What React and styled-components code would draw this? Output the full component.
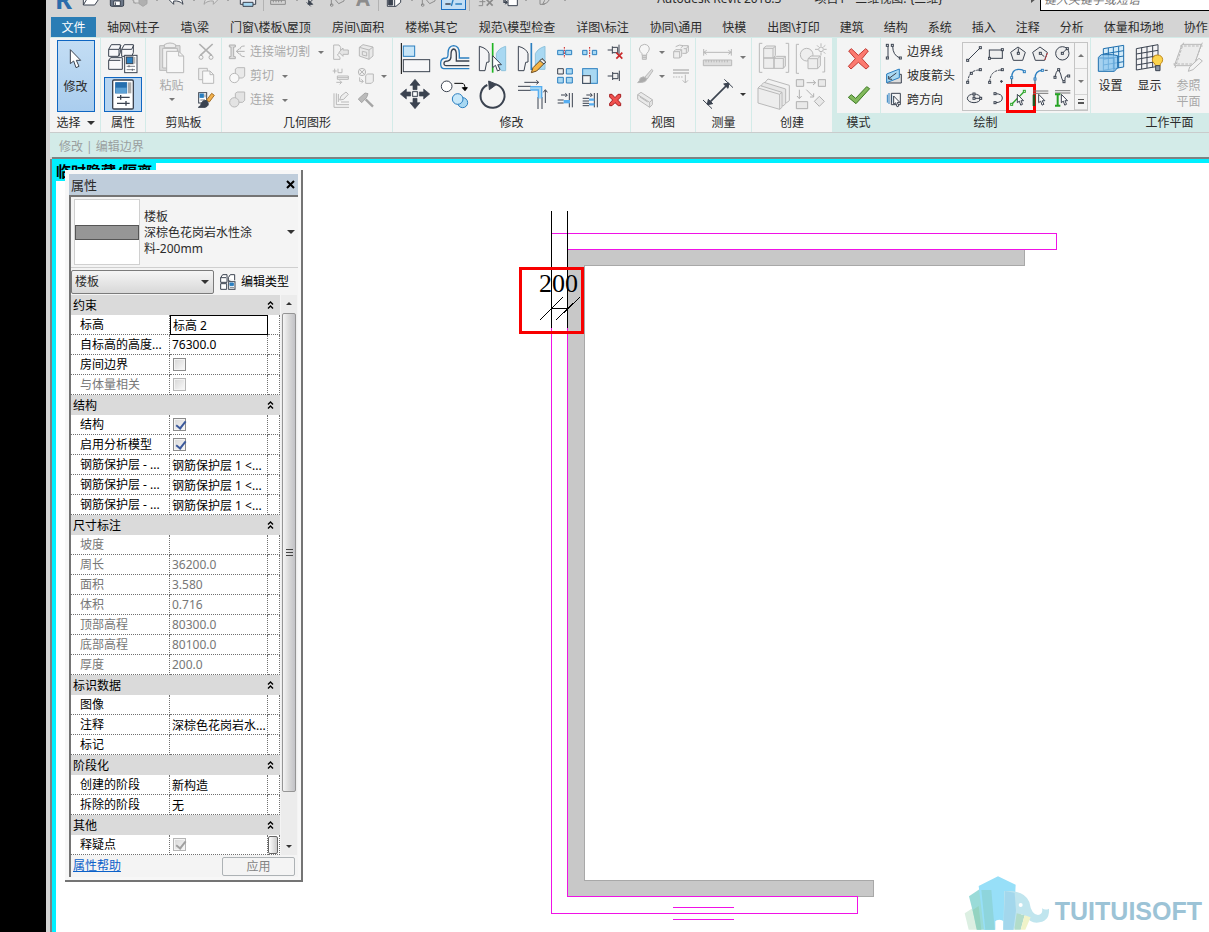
import React, { useState } from "react";
import styled, { createGlobalStyle } from "styled-components";

const D = "#3b4350";
const G = "#b9b9b9";
const B = "#2b7fc0";
const L = "#a8d8f2";
const W = "#f8f8fa";

// icons are drawn on a 3x grid: viewBox units / 3 = pixels
const Icon = ({ v, c = D, w = 3, children }) => (
  <IconSvg
    viewBox={v.join(" ")}
    width={Math.round(v[2] / 3)}
    height={Math.round(v[3] / 3)}
    fill="none"
    stroke={c}
    strokeWidth={w}
    aria-hidden="true"
  >
    {children}
  </IconSvg>
);

const Cursor = ({ x, y, s = 1 }) => (
  <path
    transform={`translate(${x} ${y}) scale(${s})`}
    d="M0 0V42L10 34L17 54L26 50L18 32H31Z"
    fill="#fff"
    stroke={D}
    strokeWidth={3 / s}
  />
);

const Dots = ({ p, c = D }) =>
  p.map(([x, y]) => (
    <rect key={x + "-" + y} x={x - 3} y={y - 3} width="6" height="6" fill="#fff" stroke={c} />
  ));

const icons = {
  // quick access
  open: (
    <Icon v={[0, 0, 54, 48]}>
      <path d="M4 42V8H18L22 14H42V22M4 42L16 22H52L38 42Z" fill="#fff" />
    </Icon>
  ),
  save: (
    <Icon v={[0, 0, 48, 48]}>
      <path d="M4 4H38L44 10V42Q44 46 40 46H8Q4 46 4 42Z" fill="#6b7687" />
      <path d="M12 4H36V20H12ZM14 30H34V44H14Z" fill="#fff" />
      <path d="M19 34V42" />
    </Icon>
  ),
  sync: (
    <Icon v={[0, 0, 54, 48]} c="#a5a5a5">
      <path d="M8 14H30V36H8ZM2 24L14 38" fill="#ddd" />
      <path d="M24 18L36 12L48 18V38L36 46L24 38Z" fill="#b0b0b0" />
      <circle cx="44" cy="20" r="7" fill="#ccc" />
    </Icon>
  ),
  undo: (
    <Icon v={[0, 0, 54, 48]}>
      <path d="M4 24L20 8V18Q46 16 48 40Q38 28 20 30V40Z" fill="#fff" />
    </Icon>
  ),
  redo: (
    <Icon v={[0, 0, 54, 48]} c="#a5a5a5">
      <path d="M50 24L34 8V18Q8 16 6 40Q16 28 34 30V40Z" fill="#ddd" />
    </Icon>
  ),
  print: (
    <Icon v={[0, 0, 54, 48]}>
      <path d="M12 4H42V20H12Z" fill="#fff" />
      <path d="M4 20H50V40H4Z" fill="#e8e8ee" />
      <path d="M12 34H42V46H12Z" fill={L} />
    </Icon>
  ),
  ruler: (
    <Icon v={[0, 0, 48, 48]} c="#8c8c8c">
      <path d="M2 14H46M2 28H46V40H2ZM10 28V34M18 28V34M26 28V34M34 28V34" />
    </Icon>
  ),
  dim: (
    <Icon v={[0, 0, 42, 48]}>
      <path d="M6 40L34 12M2 34L14 46M28 6L40 18" />
      <path d="M8 40V28L20 40Z" fill={D} />
    </Icon>
  ),
  tag: (
    <Icon v={[0, 0, 48, 48]} c="#8c8c8c">
      <path d="M4 42V20L22 10H42V30L26 38L14 24" />
      <circle cx="5" cy="42" r="4" />
      <path d="M24 18L34 26" />
    </Icon>
  ),
  cube: (
    <Icon v={[0, 0, 48, 48]}>
      <path d="M4 20L18 8H44V34L30 46H4Z" fill="#fff" />
      <path d="M4 20H26L44 10M26 20V46" />
      <path d="M8 24H20V42H8Z" fill={D} />
    </Icon>
  ),
  thin: (
    <Icon v={[0, 0, 57, 54]} c={D} w={4}>
      <path d="M4 14H20M36 14H54M4 28H20M4 42H20" />
      <path d="M22 48L34 6" stroke={B} />
      <path d="M34 28H54M34 42H54" stroke={B} />
    </Icon>
  ),
  closeWin: (
    <Icon v={[0, 0, 48, 48]} c="#8c8c8c">
      <path d="M2 20H14V44H2M14 10H30V20M4 32H22" />
      <path d="M26 26L44 44M44 26L26 44" strokeWidth="5" />
    </Icon>
  ),
  switchWin: (
    <Icon v={[0, 0, 48, 48]}>
      <path d="M18 22H46V44H18Z" fill="#fff" />
      <path d="M18 25H46M6 16V34H14" strokeWidth="4" />
      <path d="M10 28L16 34L10 40" fill={D} />
    </Icon>
  ),
  pencil: (
    <Icon v={[0, 0, 48, 48]} c="#8c8c8c">
      <path d="M6 16V40H20M14 40L20 28L40 6L46 12L26 36Z" />
    </Icon>
  ),

  // select / properties
  modify: (
    <Icon v={[84, 141, 45, 66]}>
      <Cursor x={91} y={146} />
    </Icon>
  ),
  typeProps: (
    <Icon v={[200, 126, 96, 93]}>
      <path d="M205 145L213 131H240V155L234 166H205ZM244 145L252 131H279V155L274 166H244Z" fill={W} />
      <path d="M205 145H236L242 133M236 145V166M244 145H274L280 133" />
      <path d="M205 178L211 170H246V205H205ZM205 178H240" fill={W} />
      <rect x="253" y="163" width="37" height="52" fill="#fff" />
      <rect x="258" y="168" width="20" height="20" fill={B} />
      <path d="M282 168V188" stroke="#b5b5b5" strokeWidth="6" />
      <path d="M259 196H284M259 206H284M266 192V199M276 203V210" strokeWidth="2" />
    </Icon>
  ),
  props: (
    <Icon v={[208, 234, 72, 93]}>
      <rect x="213" y="237" width="62" height="87" rx="4" fill="#fff" strokeWidth="4" />
      <rect x="222" y="245" width="33" height="31" fill="#256fae" stroke="#256fae" />
      <path d="M222 260H255V276H222Z" fill="#5ba0d4" stroke="none" />
      <path d="M264 244V277" stroke="#aaa" strokeWidth="10" />
      <path d="M226 289H264M226 307H264M237 282V296M253 300V314" strokeWidth="4" />
    </Icon>
  ),

  // clipboard
  paste: (
    <Icon v={[354, 126, 81, 96]} c={G}>
      <path d="M359 137H420V211H359Z" fill="#dcdcdc" />
      <path d="M368 145H412V204H368Z" fill="#f1f1f1" />
      <path d="M373 143V134Q390 124 407 134V143Z" fill="#eee" />
      <path d="M380 154H416L431 168V218H380Z" fill="#f7f7f7" />
      <path d="M416 154V168H431" />
    </Icon>
  ),
  cut: (
    <Icon v={[474, 129, 54, 54]} c="#b0b0b0">
      <path d="M481 132L518 166M521 132L484 166" strokeWidth="5" />
      <circle cx="486" cy="172" r="6" />
      <circle cx="516" cy="172" r="6" />
    </Icon>
  ),
  copy: (
    <Icon v={[474, 201, 54, 54]} c={G}>
      <path d="M479 205H505V239H479Z" fill="#eee" />
      <path d="M491 213H513L524 224V250H491Z" fill="#f8f8f8" />
      <path d="M513 213V224H524" />
    </Icon>
  ),
  match: (
    <Icon v={[474, 273, 54, 54]}>
      <rect x="479" y="278" width="24" height="31" fill="#fff" />
      <rect x="483" y="282" width="10" height="10" fill={B} stroke={B} />
      <path d="M484 300H498M498 283V292" strokeWidth="2" />
      <path d="M503 300L518 280L526 286L511 306Z" fill="#f3b14a" stroke="#a5702a" />
      <path d="M478 322Q486 318 488 308Q496 296 506 305Q512 318 498 322Z" fill={D} />
    </Icon>
  ),

  // geometry
  cope: (
    <Icon v={[564, 129, 54, 54]} c="#b0b0b0">
      <path d="M568 135H586V141H581V170H586V176H568V170H573V141H568Z" fill="#ddd" />
      <path d="M614 138Q600 138 600 148M614 170Q600 170 600 160M614 154H590M598 146L589 154L598 162" />
    </Icon>
  ),
  cutGeom: (
    <Icon v={[564, 201, 54, 54]} c={G}>
      <path d="M586 207L592 203H614V228L608 234H586Z" fill="#e9e9e9" />
      <circle cx="583" cy="234" r="14" fill="#f8f8f8" />
    </Icon>
  ),
  joinGeom: (
    <Icon v={[564, 273, 54, 54]} c={G}>
      <path d="M586 280L592 276H614V301L608 307H586Z" fill="#e3e3e3" />
      <circle cx="583" cy="307" r="14" fill="#e3e3e3" />
    </Icon>
  ),
  joinWall: (
    <Icon v={[873, 129, 54, 54]} c={G}>
      <path d="M878 135H894L899 142V155L889 165L897 172V178H878Z" fill="#f2f2f2" />
      <path d="M922 150H906V144L894 157L906 169V163H922Z" fill="#e5e5e5" />
    </Icon>
  ),
  wallOpen: (
    <Icon v={[948, 129, 54, 54]} c={G}>
      <path d="M955 142L966 134L996 141V168L984 178L955 168Z" fill="#e9e9e9" />
      <path d="M955 142L984 150V178M984 150L996 141M964 154L977 157V168L964 165Z" />
    </Icon>
  ),
  beam: (
    <Icon v={[873, 201, 54, 54]} c={G}>
      <path d="M881 206V220M875 213H887M891 206V218H903V206M889 228H922V238H889ZM886 247H902M896 241L902 247L896 253M889 233H922" />
    </Icon>
  ),
  split: (
    <Icon v={[948, 201, 54, 54]} c={G}>
      <circle cx="963" cy="216" r="11" fill="#eee" />
      <path d="M955 208L971 224M971 208L955 224M956 232V244H966M961 238L967 244L961 250" />
      <path d="M974 227L980 222H997V244L991 250H974Z" fill="#eee" />
    </Icon>
  ),
  paintWall: (
    <Icon v={[873, 273, 54, 54]} c={G}>
      <path d="M879 280V322H924M886 280V314H924M892 282V306M900 306H924" />
      <path d="M896 300L900 288L915 276L922 283L908 298Z" fill="#eee" />
    </Icon>
  ),
  hammer: (
    <Icon v={[948, 273, 54, 54]} c="#a5a5a5">
      <path d="M974 298L996 320" strokeWidth="7" />
      <path d="M952 297L972 279L981 281L977 292L962 308Z" fill="#bbb" />
    </Icon>
  ),

  // modify
  align: (
    <Icon v={[27, 123, 96, 96]}>
      <path d="M31 126V219" stroke="#000" />
      <rect x="37" y="135" width="34" height="31" fill="#c7e5f7" stroke={B} />
      <rect x="37" y="176" width="79" height="36" fill="#f6f6f8" />
    </Icon>
  ),
  offset: (
    <Icon v={[144, 126, 96, 93]}>
      <path d="M235 206H158Q148 204 149 188Q150 174 166 174Q172 172 171 160Q171 138 188 137Q205 138 205 160V174H235" stroke={B} strokeWidth="4" />
      <path d="M235 197H166Q158 196 159 189Q160 183 170 183Q181 181 180 164Q180 148 188 147Q196 148 196 164V183H235" strokeWidth="4" />
    </Icon>
  ),
  mirrorPick: (
    <Icon v={[264, 123, 93, 96]}>
      <path d="M268 136Q292 142 297 158V183L290 184L285 209H268Z" fill="#f4f4f6" />
      <path d="M347 136Q326 142 319 158V180L334 209H347Z" fill={L} stroke="#8fc3dd" />
      <path d="M308 126V215" stroke="#1fb522" strokeWidth="5" />
      <Cursor x={308} y={164} s={0.85} />
    </Icon>
  ),
  mirrorDraw: (
    <Icon v={[381, 123, 93, 96]}>
      <path d="M385 136Q409 142 414 158V183L407 184L402 209H385Z" fill="#f4f4f6" />
      <path d="M465 136Q444 142 436 158V205H465Z" fill={L} stroke="#8fc3dd" />
      <path d="M424 126V207" stroke={B} strokeWidth="5" />
      <path d="M424 215L429 200L456 173L467 183L440 210Z" fill="#f6b544" stroke="#6c4b1f" />
      <path d="M456 173L467 183L462 189L450 179Z" fill="#eee" />
    </Icon>
  ),
  move: (
    <Icon v={[30, 234, 93, 93]}>
      <path d="M75 235L90 253H81V266H69V253H60ZM75 323L90 305H81V292H69V305H60ZM31 279L49 264V273H62V285H49V294ZM119 279L101 264V273H88V285H101V294Z" fill={D} strokeWidth="2" />
      <rect x="68" y="272" width="14" height="14" fill="#fff" />
    </Icon>
  ),
  copyTool: (
    <Icon v={[147, 234, 90, 93]}>
      <circle cx="167" cy="256" r="16" fill="#fff" />
      <path d="M190 247H213Q222 247 222 262" stroke="#000" />
      <path d="M214 260L222 269L229 260Z" fill="#000" stroke="#000" />
      <circle cx="215" cy="305" r="15" fill={L} stroke={B} />
      <circle cx="200" cy="294" r="16" fill="#c7e8fa" stroke={B} />
    </Icon>
  ),
  rotate: (
    <Icon v={[264, 234, 93, 93]}>
      <path d="M292 252A36 36 0 1 0 318 250" strokeWidth="6" />
      <path d="M296 240L320 250L298 266Z" fill={D} />
    </Icon>
  ),
  trim: (
    <Icon v={[378, 234, 96, 93]}>
      <path d="M400 244H442M436 238L443 244L436 250M463 306V268M457 274L463 266L469 274" />
      <path d="M381 256H420M381 268H420M441 288V324M453 288V324" />
      <path d="M418 262H447V292" stroke="#56adf0" strokeWidth="14" />
      <path d="M418 262H447V292" stroke={L} strokeWidth="6" />
    </Icon>
  ),
  splitEl: (
    <Icon v={[501, 129, 54, 54]} c={B}>
      <path d="M506 151H523V164H506ZM530 151H548V164H530Z" fill={L} />
      <path d="M526 141V174" stroke="#cc1f1f" strokeDasharray="5 3" />
    </Icon>
  ),
  splitGap: (
    <Icon v={[576, 129, 54, 54]} c={B}>
      <path d="M581 151H594V164H581ZM610 151H623V164H610Z" fill={L} />
      <path d="M602 141V174" stroke="#cc1f1f" strokeDasharray="5 3" />
    </Icon>
  ),
  unpin: (
    <Icon v={[651, 129, 54, 54]}>
      <path d="M656 150H670M670 139V161M670 142H686V158H670M690 134V162" fill="#eee" />
      <path d="M682 158L700 176M700 158L682 176" stroke="#c9292b" strokeWidth="5" />
    </Icon>
  ),
  array: (
    <Icon v={[501, 201, 54, 54]} c={B}>
      <path d="M532 206H550V222H532ZM506 232H523V249H506ZM532 232H550V249H532Z" fill={L} />
      <path d="M506 206H523V222H506Z" stroke={D} fill="#eee" />
    </Icon>
  ),
  scale: (
    <Icon v={[576, 201, 54, 54]} c={B}>
      <rect x="581" y="206" width="44" height="44" fill={L} />
      <rect x="581" y="227" width="23" height="23" fill="#f4f4f4" stroke={D} />
    </Icon>
  ),
  pin: (
    <Icon v={[651, 201, 54, 54]}>
      <path d="M656 228H671M671 216V240M671 220H687V236H671M691 212V243" fill="#eee" />
    </Icon>
  ),
  trim1: (
    <Icon v={[501, 273, 54, 54]}>
      <path d="M516 285H534M529 280L535 285L529 291M506 300H524M506 309H524M541 279V322M550 279V322" />
      <path d="M524 305H543" stroke="#56adf0" strokeWidth="10" />
    </Icon>
  ),
  trim2: (
    <Icon v={[576, 273, 54, 54]}>
      <path d="M592 285H609M604 280L610 285L604 291M581 295H600M581 303H600M581 310H600M581 317H600M616 279V322M625 279V322" />
      <path d="M600 299H616M600 313H616" stroke="#56adf0" strokeWidth="7" />
    </Icon>
  ),
  del: (
    <Icon v={[651, 273, 54, 54]} c="#a51b1e">
      <path d="M662 283L669 283L678 293L687 283L695 283V291L686 300L695 310V317H688L678 308L669 317H662V310L671 300L662 291Z" fill="#f0504e" />
    </Icon>
  ),

  // view
  bulb: (
    <Icon v={[741, 129, 54, 54]} c={G}>
      <path d="M759 166V161Q751 154 751 147Q753 134 766 133Q780 134 781 147Q780 154 773 161V166Z" fill="#f6f6f6" />
      <path d="M760 166H772V178H760ZM760 172H772" fill="#ddd" />
    </Icon>
  ),
  boxes: (
    <Icon v={[846, 129, 54, 54]} c={G}>
      <path d="M851 155H869V174H851ZM851 155L857 149H875L869 155M875 149V168L869 174M872 144L880 137H895V154L889 160H877M857 140Q868 132 880 137M881 146H889V160M889 146L895 138" fill="#eee" />
    </Icon>
  ),
  brush: (
    <Icon v={[741, 201, 54, 54]} c={G}>
      <path d="M767 232L788 208L792 212L774 238Z" fill="#ddd" />
      <path d="M746 248Q752 243 754 234Q764 226 773 236Q774 248 746 248Z" fill="#aaa" />
    </Icon>
  ),
  lines: (
    <Icon v={[846, 201, 54, 54]} c={G}>
      <path d="M849 210H897M849 219H897" strokeWidth="4" />
      <path d="M849 231H880" strokeDasharray="5 3" />
      <path d="M886 224V248M878 241L886 249L894 241" />
    </Icon>
  ),
  clip: (
    <Icon v={[741, 273, 54, 54]} c={G}>
      <path d="M746 284L756 277L790 299V314L782 322L746 298Z" fill="#eaeaea" />
      <path d="M746 284L782 307V322M782 307L790 299M753 291L776 306" />
    </Icon>
  ),

  // measure
  measure: (
    <Icon v={[36, 141, 93, 63]} c={G}>
      <path d="M41 157H124M50 151L41 157L50 163M115 151L124 157L115 163M41 147V167M124 147V167" />
      <path d="M40 180H125V197H40Z" fill="#ddd" />
      <path d="M48 180V187M56 180V187M64 180V187M72 180V187M80 180V187M88 180V187M96 180V187M104 180V187M112 180V187" />
    </Icon>
  ),
  aligned: (
    <Icon v={[36, 231, 93, 96]}>
      <path d="M53 310L116 247" strokeWidth="5" />
      <path d="M39 297L66 323M103 235L129 260" />
      <path d="M52 311L55 295L68 308ZM117 246L101 249L114 262Z" fill={D} />
    </Icon>
  ),

  // create
  assembly: (
    <Icon v={[204, 126, 96, 96]} c={G}>
      <path d="M217 130H208V217H217M287 130H296V217H287" />
      <path d="M221 144L229 138H256V166L250 174H221ZM221 174H252V205H221ZM252 174L260 169H286V198L280 205H252Z" fill="#ededed" />
      <path d="M221 145H249L256 139M249 145V173M252 175H280V205M280 175L286 169" />
    </Icon>
  ),
  group: (
    <Icon v={[318, 123, 96, 96]} c={G}>
      <path d="M330 130H322V217H330M400 213H407V168" />
      <circle cx="353" cy="161" r="19" fill="#eee" />
      <path d="M357 173L366 165H394V194L386 203H357Z" fill="#ededed" />
      <path d="M357 173H386V203M386 173L394 165" />
      <circle cx="396" cy="145" r="7" />
      <path d="M396 127V136M396 154V163M378 145H387M405 145H413M384 133L389 138M403 152L409 158M409 133L403 138" />
    </Icon>
  ),
  parts: (
    <Icon v={[201, 234, 99, 96]} c={G}>
      <path d="M226 246L234 237L298 256V302L290 308L226 290Z" fill="#f2f2f2" />
      <path d="M215 254L222 247L287 267V311L279 318L215 298Z" fill="#e6e6e6" />
      <path d="M204 264L211 257L276 277V322L269 328L204 309Z" fill="#ededed" />
      <path d="M204 264L269 283V328M269 283L276 277" />
    </Icon>
  ),
  similar: (
    <Icon v={[315, 231, 93, 96]} c="#b0b0b0">
      <path d="M319 236H341V256H319ZM385 236H407V256H385ZM319 302H353V323H319ZM388 286L403 301L388 316L373 301Z" fill="#e9e9e9" />
      <path d="M350 245H376M369 238L377 245L369 252M328 266V292M321 285L328 293L335 285M349 266L370 287M371 277V288H360" />
    </Icon>
  ),

  // mode
  cancel: (
    <Icon v={[471, 138, 72, 72]} c="#c23a33">
      <path d="M476 150L484 143L505 163L527 143L535 150L516 173L537 196L528 204L505 184L483 204L475 196L496 173Z" fill="#fb7a70" />
    </Icon>
  ),
  finish: (
    <Icon v={[471, 249, 72, 66]} c="#3d7a24">
      <path d="M475 289L484 281L497 292L530 257L539 263L498 308Z" fill="#82b95c" />
    </Icon>
  ),
  boundary: (
    <Icon v={[591, 129, 54, 54]}>
      <path d="M600 138V174M614 138Q614 166 636 174" />
      <Dots p={[[598, 136], [598, 174], [613, 136], [637, 174]]} />
    </Icon>
  ),
  slope: (
    <Icon v={[591, 201, 54, 54]} c={D}>
      <path d="M597 223H640V249H597Z" fill="#ddd" />
      <path d="M596 222L634 207V233L596 248Z" fill={L} stroke={B} />
      <path d="M602 236L625 219M602 228V237L612 238" />
    </Icon>
  ),
  span: (
    <Icon v={[591, 273, 54, 54]}>
      <path d="M598 284V308M603 279V312M611 284V308" stroke={B} />
      <path d="M610 280H637V314H610Z" />
      <Cursor x={617} y={288} s={0.6} />
    </Icon>
  ),

  // draw gallery
  line: (
    <Icon v={[78, 135, 48, 54]}>
      <path d="M84 180L120 144" />
      <Dots p={[[83, 181], [121, 143]]} />
    </Icon>
  ),
  rect: (
    <Icon v={[144, 135, 48, 54]}>
      <rect x="148" y="150" width="39" height="25" fill="#eee" />
      <Dots p={[[187, 149], [148, 175]]} />
    </Icon>
  ),
  polyIn: (
    <Icon v={[210, 135, 48, 54]}>
      <path d="M234 141L256 157L248 181H220L212 157Z" fill="#eee" />
      <path d="M235 160V145" />
      <Dots p={[[235, 160]]} />
    </Icon>
  ),
  polyOut: (
    <Icon v={[276, 135, 48, 54]}>
      <path d="M300 141L322 157L314 181H286L278 157Z" fill="#eee" />
      <path d="M301 160L313 170" />
      <path d="M322 160L314 181" stroke="#d22" strokeDasharray="5 3" />
      <Dots p={[[301, 160]]} />
    </Icon>
  ),
  circle: (
    <Icon v={[339, 135, 51, 54]}>
      <circle cx="364" cy="160" r="20" fill="#eee" />
      <path d="M364 160L378 146" />
      <Dots p={[[364, 160], [379, 146]]} />
    </Icon>
  ),
  arc3: (
    <Icon v={[78, 201, 48, 54]}>
      <path d="M84 247Q84 210 120 210" strokeDasharray="9 3" />
      <Dots p={[[83, 247], [94, 220], [121, 209]]} />
    </Icon>
  ),
  arcC: (
    <Icon v={[144, 201, 48, 54]}>
      <path d="M149 247Q150 210 186 210" strokeDasharray="9 3" />
      <Dots p={[[149, 247], [187, 209]]} />
      <path d="M180 244H189M184 240V249" />
    </Icon>
  ),
  tangent: (
    <Icon v={[210, 201, 48, 54]} c={B}>
      <path d="M215 232Q216 208 236 208Q252 208 252 216" strokeWidth="4" />
      <path d="M215 236V254" stroke={D} />
      <Dots p={[[215, 233], [253, 215]]} c={B} />
    </Icon>
  ),
  fillet: (
    <Icon v={[276, 201, 48, 54]} c={B}>
      <path d="M285 236Q285 211 308 211" strokeWidth="4" />
      <path d="M285 240V254M314 211H323" stroke={D} />
      <Dots p={[[285, 237], [307, 211]]} c={B} />
    </Icon>
  ),
  spline: (
    <Icon v={[339, 201, 54, 54]}>
      <path d="M345 230Q353 196 362 222Q368 252 375 240Q374 225 386 228" />
      <Dots p={[[345, 232], [356, 209], [372, 245], [386, 228]]} />
    </Icon>
  ),
  ellipse: (
    <Icon v={[75, 270, 51, 54]}>
      <ellipse cx="99" cy="295" rx="20" ry="13" fill="#eee" />
      <path d="M99 295V282M99 295H119" />
      <Dots p={[[99, 295], [119, 295], [99, 282]]} />
    </Icon>
  ),
  halfEllipse: (
    <Icon v={[144, 270, 48, 54]}>
      <path d="M165 281Q187 281 187 294Q187 308 165 308" />
      <Dots p={[[165, 281], [165, 308]]} />
    </Icon>
  ),
  pickLines: (
    <Icon v={[210, 267, 51, 57]} c="#2ca52a">
      <path d="M215 313L252 275" strokeWidth="4" />
      <Dots p={[[215, 313], [253, 274]]} c="#2ca52a" />
      <Cursor x={232} y={283} s={0.6} />
    </Icon>
  ),
  pickWalls: (
    <Icon v={[270, 267, 54, 57]}>
      <path d="M276 273H322M276 280H322" stroke="#777" />
      <path d="M279 284V318" stroke="#1c5b22" strokeWidth="8" />
      <Cursor x={293} y={283} s={0.6} />
    </Icon>
  ),
  pickSupports: (
    <Icon v={[336, 267, 54, 57]}>
      <path d="M342 272H388M342 279H388" stroke="#777" />
      <path d="M342 283H358M350 283V317M342 317H358" stroke="#25a323" strokeWidth="6" />
      <Cursor x={361} y={283} s={0.6} />
    </Icon>
  ),

  // work plane
  setPlane: (
    <Icon v={[471, 129, 84, 96]} c="#1f6fae">
      <path d="M490 149L551 139V204L490 214Z" fill="#d4ecfa" />
      <path d="M505 147V212M520 144V209M536 142V207M490 165L551 155M490 181L551 171M490 198L551 188" />
      <path d="M475 175L484 167H517L533 170V206L523 217H475Z" fill="#8cc6ee" fillOpacity="0.75" />
      <path d="M475 177H522V217" stroke="#5ba0d4" />
    </Icon>
  ),
  showPlane: (
    <Icon v={[588, 129, 87, 96]}>
      <path d="M592 149L657 137V202L592 213Z" fill="#f3f3f5" />
      <path d="M608 146V210M624 143V207M641 140V205M592 165L657 154M592 181L657 170M592 198L657 187" />
      <path d="M648 200V195Q639 189 640 182Q642 168 656 168Q670 169 671 182Q671 190 664 195V200Z" fill="#fbd44d" stroke="#c28a1b" />
      <path d="M650 200H663V215H650Z" fill="#8993a3" />
    </Icon>
  ),
  refPlane: (
    <Icon v={[702, 129, 93, 96]} c={G}>
      <path d="M729 136H787L765 200H706Z" fill="#ececec" />
      <path d="M734 131L708 207M790 131L762 207M723 141H792M703 195H768" strokeDasharray="8 4" />
      <path d="M748 217L752 204L780 178L790 186L762 212Z" fill="#f3f3f3" />
    </Icon>
  ),
  editType: (
    <Icon v={[507, 348, 54, 54]}>
      <path d="M512 362L518 353H531V376H512ZM535 362L541 353H554V370M512 380H530V397H512ZM512 362H528M535 362V372H541" fill="#fff" />
      <rect x="536" y="374" width="19" height="23" fill="#fff" />
      <path d="M540 378H550V386H540Z" fill={B} stroke={B} />
      <path d="M540 392H552" strokeWidth="2" />
    </Icon>
  ),
};

const quickItems = [
  ["open", 28], ["save", 23], ["sync", 23], ["caret", 12], ["undo", 26], ["caret", 9],
  ["redo", 25], ["caret", 9], ["print", 31], ["sep", 1], ["ruler", 28], ["caret", 9],
  ["dim", 24], ["tag", 26], ["A", 24], ["sep", 6], ["cube", 26], ["caret", 9],
  ["tag", 25], ["thin", 25], ["sep", 6], ["closeWin", 28], ["switchWin", 20],
  ["caret", 11], ["pencil", 29], ["caret", 9],
];

const tabs = [
  "轴网\\柱子", "墙\\梁", "门窗\\楼板\\屋顶", "房间\\面积", "楼梯\\其它", "规范\\模型检查",
  "详图\\标注", "协同\\通用", "快模", "出图\\打印", "建筑", "结构", "系统", "插入", "注释",
  "分析", "体量和场地", "协作",
];

const gallery = [
  "line", "rect", "polyIn", "polyOut", "circle",
  "arc3", "arcC", "tangent", "fillet", "spline",
  "ellipse", "halfEllipse", "pickLines", "pickWalls", "pickSupports",
];

const sections = [
  {
    title: "约束",
    rows: [
      { name: "标高", value: "标高 2", active: true },
      { name: "自标高的高度...", value: "76300.0" },
      { name: "房间边界", check: false },
      { name: "与体量相关", check: false, off: true },
    ],
  },
  {
    title: "结构",
    rows: [
      { name: "结构", check: true },
      { name: "启用分析模型", check: true },
      { name: "钢筋保护层 - ...", value: "钢筋保护层 1 <..." },
      { name: "钢筋保护层 - ...", value: "钢筋保护层 1 <..." },
      { name: "钢筋保护层 - ...", value: "钢筋保护层 1 <..." },
    ],
  },
  {
    title: "尺寸标注",
    rows: [
      { name: "坡度", value: "", off: true },
      { name: "周长", value: "36200.0", off: true },
      { name: "面积", value: "3.580", off: true },
      { name: "体积", value: "0.716", off: true },
      { name: "顶部高程", value: "80300.0", off: true },
      { name: "底部高程", value: "80100.0", off: true },
      { name: "厚度", value: "200.0", off: true },
    ],
  },
  {
    title: "标识数据",
    rows: [
      { name: "图像", value: "" },
      { name: "注释", value: "深棕色花岗岩水..." },
      { name: "标记", value: "" },
    ],
  },
  {
    title: "阶段化",
    rows: [
      { name: "创建的阶段", value: "新构造" },
      { name: "拆除的阶段", value: "无" },
    ],
  },
  { title: "其他", rows: [{ name: "释疑点", check: true, locked: true, more: true }] },
];

const Tool = ({ n, label }) => (
  <ToolButton aria-label={label || n}>{icons[n]}</ToolButton>
);

const Panel = ({ title, width, green, caret, pad, start, children }) => (
  <PanelBox $width={width}>
    <PanelBody $pad={pad} $start={start}>
      {children}
    </PanelBody>
    <PanelTitle $green={green}>
      {title}
      {caret && <Caret $dark $wide />}
    </PanelTitle>
  </PanelBox>
);

const QuickAccess = () => (
  <QuickBar>
    <AppLogo>R</AppLogo>
    {quickItems.map(([n, w], i) => (
      <QuickSlot key={i} $width={w} $on={n === "thin"}>
        {n === "caret" && <Caret />}
        {n === "sep" && <QuickSep />}
        {n === "A" && <Letter>A</Letter>}
        {icons[n]}
      </QuickSlot>
    ))}
  </QuickBar>
);

const Ribbon = () => (
  <RibbonBar>
    <Panel title="选择" width={50} caret>
      <ModifyButton>
        {icons.modify}
        修改
      </ModifyButton>
    </Panel>
    <Panel title="属性" width={45}>
      <Stack>
        <Tool n="typeProps" />
        <OnButton aria-label="属性">{icons.props}</OnButton>
      </Stack>
    </Panel>
    <Panel title="剪贴板" width={76} pad={6}>
      <TallButton $off>
        {icons.paste}
        <span>粘贴</span>
        <Caret />
      </TallButton>
      <SmallGrid $cols="30px">
        <Tool n="cut" />
        <Tool n="copy" />
        <Tool n="match" />
      </SmallGrid>
    </Panel>
    <Panel title="几何图形" width={171} pad={4}>
      <TextTools>
        <TextTool $off>{icons.cope}连接端切割<Caret /></TextTool>
        <TextTool $off>{icons.cutGeom}剪切<Caret /></TextTool>
        <TextTool $off>{icons.joinGeom}连接<Caret /></TextTool>
      </TextTools>
      <SmallGrid $cols="25px 25px 12px">
        <Tool n="joinWall" />
        <Tool n="wallOpen" />
        <span />
        <Tool n="beam" />
        <Tool n="split" />
        <Caret />
        <Tool n="paintWall" />
        <Tool n="hammer" />
      </SmallGrid>
    </Panel>
    <Panel title="修改" width={238}>
      <BigGrid $cols="repeat(4, 39px)">
        <Tool n="align" />
        <Tool n="offset" />
        <Tool n="mirrorPick" />
        <Tool n="mirrorDraw" />
        <Tool n="move" />
        <Tool n="copyTool" />
        <Tool n="rotate" />
        <Tool n="trim" />
      </BigGrid>
      <SmallGrid $cols="repeat(3, 25px)">
        <Tool n="splitEl" />
        <Tool n="splitGap" />
        <Tool n="unpin" />
        <Tool n="array" />
        <Tool n="scale" />
        <Tool n="pin" />
        <Tool n="trim1" />
        <Tool n="trim2" />
        <Tool n="del" />
      </SmallGrid>
    </Panel>
    <Panel title="视图" width={65} pad={2}>
      <SmallGrid $cols="22px 12px 26px">
        <Tool n="bulb" />
        <Caret />
        <Tool n="boxes" />
        <Tool n="brush" />
        <Caret />
        <Tool n="lines" />
        <Tool n="clip" />
      </SmallGrid>
    </Panel>
    <Panel title="测量" width={56}>
      <BigGrid $cols="38px 12px">
        <Tool n="measure" />
        <Caret />
        <Tool n="aligned" />
        <Caret $dark />
      </BigGrid>
    </Panel>
    <Panel title="创建" width={81}>
      <BigGrid $cols="37px 37px">
        <Tool n="assembly" />
        <Tool n="group" />
        <Tool n="parts" />
        <Tool n="similar" />
      </BigGrid>
    </Panel>
    <PanelGap />
    <Panel title="模式" width={44} green>
      <Stack>
        <Tool n="cancel" label="取消编辑模式" />
        <Tool n="finish" label="完成编辑模式" />
      </Stack>
    </Panel>
    <Panel title="绘制" width={210} green pad={2}>
      <TextTools $narrow>
        <TextTool>{icons.boundary}边界线</TextTool>
        <TextTool>{icons.slope}坡度箭头</TextTool>
        <TextTool>{icons.span}跨方向</TextTool>
      </TextTools>
      <Gallery>
        <GalleryItems>
          {gallery.map((n) => (
            <GalleryButton key={n} aria-label={n}>
              {icons[n]}
              {n === "pickLines" && <Mark />}
            </GalleryButton>
          ))}
        </GalleryItems>
        <GalleryScroll>
          <button aria-label="上移"><Caret $up /></button>
          <button aria-label="下移"><Caret /></button>
          <button aria-label="展开"><ExpandMark /></button>
        </GalleryScroll>
      </Gallery>
    </Panel>
    <Panel title="工作平面" width={158} green start>
      <TallButton>
        {icons.setPlane}
        <span>设置</span>
      </TallButton>
      <TallButton>
        {icons.showPlane}
        <span>显示</span>
      </TallButton>
      <TallButton $off>
        {icons.refPlane}
        <span>参照<br />平面</span>
      </TallButton>
    </Panel>
  </RibbonBar>
);

const PropertyRow = ({ row, id }) => {
  const isCheck = row.check !== undefined;
  return (
    <tr>
      <NameCell $off={row.off}>
        <label htmlFor={id}>{row.name}</label>
      </NameCell>
      <ValueCell $active={row.active}>
        {isCheck ? (
          <Check id={id} type="checkbox" defaultChecked={row.check} disabled={row.off || row.locked} />
        ) : (
          <ValueInput id={id} defaultValue={row.value} disabled={row.off} />
        )}
      </ValueCell>
      <EdgeCell>{row.more && <MoreButton aria-label="更多" />}</EdgeCell>
    </tr>
  );
};

const Properties = () => (
  <Palette>
    <PaletteHeader>
      属性
      <CloseButton aria-label="关闭">
        <svg width="9" height="9" viewBox="0 0 9 9" stroke="#000" strokeWidth="2">
          <path d="M1 1L8 8M8 1L1 8" />
        </svg>
      </CloseButton>
    </PaletteHeader>
    <PaletteBody>
      <TypeSelector>
        <Preview>
          <span />
        </Preview>
        <TypeName>
          楼板
          <br />
          深棕色花岗岩水性涂料-200mm
        </TypeName>
        <Caret $dark $wide />
      </TypeSelector>
      <FilterRow>
        <SelectWrap>
          <FilterSelect aria-label="类别" defaultValue="楼板">
            <option>楼板</option>
          </FilterSelect>
          <Caret $dark $wide />
        </SelectWrap>
        <EditType>
          {icons.editType}
          编辑类型
        </EditType>
      </FilterRow>
      <TableArea>
        <PropTable>
          <colgroup>
            <col width="99" />
            <col width="98" />
            <col width="12" />
          </colgroup>
          <tbody>
            {sections.map((s, i) => (
              <React.Fragment key={s.title}>
                <tr>
                  <SectionCell colSpan={3}>
                    <SectionButton>
                      {s.title}
                      <svg width="7" height="8" viewBox="0 0 7 8" fill="none" stroke="#000">
                        <path d="M1 3.5L3.5 1L6 3.5M1 7.5L3.5 5L6 7.5" strokeWidth="1.4" />
                      </svg>
                    </SectionButton>
                  </SectionCell>
                </tr>
                {s.rows.map((r, j) => (
                  <PropertyRow key={j} row={r} id={`prop-${i}-${j}`} />
                ))}
              </React.Fragment>
            ))}
          </tbody>
        </PropTable>
        <ScrollBar>
          <Caret $up $dark />
          <Thumb>
            <i />
            <i />
            <i />
          </Thumb>
          <Caret $dark />
        </ScrollBar>
      </TableArea>
      <PaletteFooter>
        <HelpLink href="#help">属性帮助</HelpLink>
        <ApplyButton disabled>应用</ApplyButton>
      </PaletteFooter>
    </PaletteBody>
  </Palette>
);

const Drawing = () => (
  <DrawingSvg>
    <g transform="translate(-56 -163)" fill="none" shapeRendering="crispEdges">
      <path
        d="M567.5 249.5H1024.5V265.5H584.5V880.5H873.5V896.5H567.5Z"
        fill="#c8c8c8"
        stroke="#a8a8a8"
      />
      <path d="M551.5 328V913.5H857.5V896.5H567.5V328M551.5 233.5H1056.5V249.5H567.5" stroke="#f012e6" />
      <path d="M673 907.5H734M673 919.5H734" stroke="#f012e6" />
      <path d="M551.5 211V328M567.5 211V328M551 308.5H568" stroke="#000" />
      <path d="M540 320L563 297M556 320L580 297" stroke="#000" />
      <rect x="520.5" y="268.5" width="62" height="64" stroke="#f80000" strokeWidth="3" />
      <text x="539" y="292" fill="#000" fontSize="26" fontFamily='"Liberation Serif", serif'>
        200
      </text>
    </g>
  </DrawingSvg>
);

const Watermark = () => (
  <WatermarkBox>
    <svg width="87" height="54" viewBox="40 46 261 162">
      <path d="M42 158L70 140L90 207H54Z" fill="#dcefe2" />
      <path d="M55 107L92 82L124 90L132 207H80Z" fill="#9adbd8" />
      <path d="M66 148L84 136L92 207H78Z" fill="#94d3c0" />
      <path d="M84 76L142 47L195 72L188 207H158V182Q156 177 146 177Q136 177 134 182V207H100Z" fill="#97dff8" />
      <path d="M92 88L122 88L132 207H104Z" fill="#8ed5dc" />
      <path d="M161 91Q222 88 236 124Q242 162 262 163Q278 160 274 143Q284 150 295 144Q298 184 258 186Q236 184 228 168L212 160L190 207H158Z" fill="#c0e5ee" />
      <path d="M163 91L192 96L196 150L188 207H158Z" fill="#a3d7ec" />
      <path d="M198 158L222 164L210 207H191Z" fill="#b2dcc9" />
      <path d="M222 164L240 170L224 207H210Z" fill="#f0f3c9" />
      <circle cx="210" cy="133" r="6" fill="#fff" />
    </svg>
    <span>TUITUISOFT</span>
  </WatermarkBox>
);

const App = () => {
  const [query, setQuery] = useState("");
  return (
    <Screen>
      <GlobalStyle />
      <Window>
        <TitleBar>
          <QuickAccess />
          <TitleText>
            <span>Autodesk Revit 2018.3 -</span>
            <span>项目1 - 三维视图: {"{三维}"}</span>
          </TitleText>
          <SideCaret />
          <Search
            aria-label="搜索"
            placeholder="键入关键字或短语"
            value={query}
            onChange={(e) => setQuery(e.target.value)}
          />
        </TitleBar>
        <TabBar>
          <FileTab>文件</FileTab>
          {tabs.map((t) => (
            <Tab key={t} $pair={t.includes("\\")}>
              {t}
            </Tab>
          ))}
        </TabBar>
        <Ribbon />
        <OptionsBar>修改 | 编辑边界</OptionsBar>
        <View>
          <Banner>临时隐藏/隔离</Banner>
          <Drawing />
          <Properties />
          <Watermark />
        </View>
      </Window>
    </Screen>
  );
};

const GlobalStyle = createGlobalStyle`
  * {
    box-sizing: border-box;
  }
  body {
    margin: 0;
    overflow: hidden;
    font: 12px/16px "Noto Sans", "Noto Sans CJK SC", sans-serif;
    color: #2b2b2b;
  }
  button, input, select {
    font: inherit;
    color: inherit;
    margin: 0;
    padding: 0;
    border: 0;
    background: none;
  }
`;

const Screen = styled.div`
  display: flex;
  height: 100vh;
  padding-left: 46px;
  background: #000;
  overflow: hidden;
`;

const Window = styled.div`
  flex: 1;
  min-width: 0;
  display: flex;
  flex-direction: column;
  padding-left: 4px;
  background: #d4d4d4;
  overflow: hidden;
`;

const IconSvg = styled.svg`
  display: block;
  flex: none;
`;

const Caret = styled.i`
  flex: none;
  align-self: center;
  justify-self: center;
  width: 0;
  height: 0;
  border: solid transparent;
  border-width: ${(p) => (p.$wide ? "4px 4px 0" : "3px 3px 0")};
  border-top-color: ${(p) => (p.$dark ? "#333" : "#777")};
  transform: ${(p) => (p.$up ? "rotate(180deg)" : "none")};
`;

// the top half of the caption runs off the screen
const TitleBar = styled.header`
  display: flex;
  align-items: center;
  flex: none;
  height: 36px;
  margin-top: -19px;
`;

const QuickBar = styled.div`
  display: flex;
  align-items: center;
`;

const AppLogo = styled.span`
  width: 27px;
  text-align: center;
  font-size: 26px;
  font-weight: bold;
  color: #2b6cab;
`;

const QuickSlot = styled.button`
  display: flex;
  align-items: center;
  justify-content: center;
  height: 22px;
  width: ${(p) => p.$width}px;
  background: ${(p) => (p.$on ? "#c2def5" : "none")};
  border: ${(p) => (p.$on ? "1px solid #1a6fc4" : "0")};
`;

const QuickSep = styled.i`
  width: 1px;
  height: 24px;
  flex: none;
  background: #b2b2b2;
`;

const Letter = styled.b`
  font-size: 20px;
  color: #8c8c8c;
`;

const TitleText = styled.div`
  flex: 1;
  display: flex;
  justify-content: center;
  gap: 26px;
  white-space: pre;
`;

const SideCaret = styled.i`
  border: solid transparent;
  border-width: 4px 0 4px 5px;
  border-left-color: #555;
  margin-right: 4px;
`;

const Search = styled.input`
  width: 169px;
  height: 23px;
  padding: 0 3px;
  background: #fff;
  border: 1px solid #000;
  border-right: 0;
  &::placeholder {
    color: #777;
    font-style: italic;
  }
`;

const TabBar = styled.nav`
  display: flex;
  flex: none;
  height: 20px;
  padding-left: 1px;
`;

const Tab = styled.button`
  flex: none;
  padding: 0 10px 0 ${(p) => (p.$pair ? 11 : 10)}px;
  line-height: 21px;
  white-space: nowrap;
`;

const FileTab = styled(Tab)`
  width: 45px;
  background: #2a7db5;
  color: #fff;
`;

const RibbonBar = styled.div`
  display: flex;
  flex: none;
  padding-left: 1px;
  height: 95px;
  background: #f4f4f4;
  border-top: 1px solid #d3ebe8;
  overflow: hidden;
`;

const PanelBox = styled.section`
  flex: none;
  display: flex;
  flex-direction: column;
  width: ${(p) => p.$width}px;
  border-right: 1px solid #d3ebe8;
`;

const PanelBody = styled.div`
  flex: 1;
  display: flex;
  justify-content: ${(p) => (p.$start ? "flex-start" : "center")};
  padding-top: 2px;
  padding-left: ${(p) => p.$pad || 0}px;
`;

const PanelTitle = styled.div`
  display: flex;
  align-items: center;
  justify-content: center;
  gap: 6px;
  height: 19px;
  background: ${(p) => (p.$green ? "#d3ebe8" : "none")};
`;

const PanelGap = styled.div`
  flex: none;
  width: 4px;
  background: #d3ebe8;
`;

const Stack = styled.div`
  display: grid;
  grid-template-rows: 37px 35px;
  justify-items: center;
`;

const ToolButton = styled.button`
  display: flex;
  align-items: center;
  justify-content: center;
`;

const ModifyButton = styled.button`
  display: flex;
  flex-direction: column;
  align-items: center;
  gap: 9px;
  width: 38px;
  height: 72px;
  padding-top: 7px;
  background: linear-gradient(#c3ddf4, #aacdee);
  border: 1px solid #0f66c2;
`;

const OnButton = styled(ToolButton)`
  width: 38px;
  height: 35px;
  background: #b7d5f1;
  border: 1px solid #0f66c2;
`;

const TallButton = styled.button`
  display: flex;
  flex-direction: column;
  align-items: center;
  flex: none;
  width: 39px;
  padding-top: 2px;
  color: ${(p) => (p.$off ? "#a9a9a9" : "inherit")};
  svg {
    margin-bottom: 4px;
  }
  i {
    margin-top: 4px;
  }
`;

const SmallGrid = styled.div`
  display: grid;
  grid-template-columns: ${(p) => p.$cols};
  grid-template-rows: repeat(3, 24px);
`;

const BigGrid = styled.div`
  display: grid;
  grid-template-columns: ${(p) => p.$cols};
  grid-template-rows: 35px 38px;
`;

const TextTools = styled.div`
  display: grid;
  grid-template-rows: repeat(3, 24px);
  width: ${(p) => (p.$narrow ? "77px" : "100px")};
`;

const TextTool = styled.button`
  display: flex;
  align-items: center;
  gap: 4px;
  white-space: nowrap;
  color: ${(p) => (p.$off ? "#a9a9a9" : "inherit")};
  i {
    margin-left: 4px;
  }
`;

const Gallery = styled.div`
  display: flex;
  width: 126px;
  height: 69px;
  margin-top: 2px;
  border: 1px solid #c4c4c4;
`;

const GalleryItems = styled.div`
  flex: 1;
  display: grid;
  grid-template-columns: repeat(5, 22px);
  grid-template-rows: 21px 23px 23px;
`;

const GalleryButton = styled(ToolButton)`
  position: relative;
`;

const Mark = styled.span`
  position: absolute;
  inset: -3px -7px -3px -1px;
  border: 3px solid #fb0000;
`;

const GalleryScroll = styled.div`
  display: grid;
  grid-template-rows: 1fr 1fr 15px;
  width: 13px;
  border-left: 1px solid #c4c4c4;
  button {
    display: flex;
    justify-content: center;
    border-bottom: 1px solid #d4d4d4;
  }
`;

const ExpandMark = styled(Caret)`
  width: 6px;
  height: 7px;
  border-width: 0;
  background: linear-gradient(#555 0 1px, transparent 1px 3px, #555 3px 5px, transparent 5px);
`;

const OptionsBar = styled.div`
  flex: none;
  height: 25px;
  padding: 6px 9px 0;
  background: #d3ebe8;
  border-top: 1px solid #c9cccc;
  color: #9a9f9f;
`;

const View = styled.main`
  flex: 1;
  position: relative;
  min-height: 0;
  background: #fff;
  border: solid #00f0ff;
  border-width: 4px 0 0 4px;
  box-shadow: 0 -2px #7d8283, -2px 0 #7d8283;
  margin: 2px 0 0 2px;
`;

const Banner = styled.div`
  width: max-content;
  height: 18px;
  padding-right: 4px;
  background: #00f0ff;
  color: #000;
  font-size: 15px;
  line-height: 16px;
  font-weight: bold;
`;

const DrawingSvg = styled.svg`
  position: absolute;
  inset: 0;
  width: 100%;
  height: 100%;
`;

const Palette = styled.aside`
  position: absolute;
  left: 9px;
  top: 7px;
  width: 238px;
  padding: 4px 3px 3px 4px;
  background: #f7f7f7;
  border: solid #747474;
  border-width: 0 2px 2px 0;
`;

const PaletteHeader = styled.div`
  display: flex;
  align-items: center;
  justify-content: space-between;
  height: 21px;
  padding: 0 3px 0 2px;
  font-size: 13px;
  background: #bfcddb;
`;

const CloseButton = styled.button`
  display: flex;
`;

const PaletteBody = styled.div`
  border: solid #747474;
  border-width: 2px 0 0 2px;
  background: #f4f4f4;
`;

const TypeSelector = styled.button`
  display: flex;
  align-items: center;
  gap: 4px;
  width: 100%;
  height: 71px;
  padding: 0 3px;
  text-align: left;
  border-bottom: 1px solid #cfcfcf;
`;

const Preview = styled.span`
  display: flex;
  align-items: center;
  flex: none;
  width: 66px;
  height: 66px;
  background: #fff;
  border: 1px solid #d0d0d0;
  span {
    flex: 1;
    height: 15px;
    background: #969696;
    border: 1px solid #555;
  }
`;

const TypeName = styled.span`
  flex: 1;
  margin-right: 30px;
  padding-top: 2px;
`;

const FilterRow = styled.div`
  display: flex;
  align-items: center;
  gap: 5px;
  height: 27px;
`;

const SelectWrap = styled.div`
  display: flex;
  width: 143px;
  height: 24px;
  padding: 0 4px 0 3px;
  border: 1px solid #7b7b7b;
  border-radius: 2px;
  background: linear-gradient(#f5f5f5, #d8d8d8);
`;

const FilterSelect = styled.select`
  flex: 1;
  appearance: none;
`;

const EditType = styled.button`
  display: flex;
  align-items: center;
  gap: 4px;
  color: #000;
`;

const TableArea = styled.div`
  display: flex;
`;

const PropTable = styled.table`
  width: 209px;
  table-layout: fixed;
  border-spacing: 0;
  background: #fff;
  color: #000;
  td {
    height: 20px;
    padding: 0;
    white-space: nowrap;
    overflow: hidden;
  }
`;

const SectionCell = styled.td`
  background: #dadada;
`;

const SectionButton = styled.button`
  display: flex;
  align-items: center;
  justify-content: space-between;
  width: 100%;
  padding: 0 6px 0 2px;
  line-height: 19px;
`;

const NameCell = styled.td`
  border: dotted #707070;
  border-width: 0 1px 1px 0;
  color: ${(p) => (p.$off ? "#777" : "#000")};
  label {
    padding-left: 9px;
  }
`;

const ValueCell = styled.td`
  border: ${(p) => (p.$active ? "1px solid #000" : "dotted #707070")};
  ${(p) => !p.$active && "border-width: 0 1px 1px 0;"}
`;

const ValueInput = styled.input`
  display: block;
  width: 100%;
  height: 18px;
  padding-left: 2px;
  &:disabled {
    color: #777;
  }
`;

const Check = styled.input`
  appearance: none;
  display: block;
  width: 13px;
  height: 13px;
  margin-left: 3px;
  border: 1px solid #8b8b8b;
  background: linear-gradient(135deg, #d6d6d6, #fafafa);
  box-shadow: inset 0 0 0 1px #f4f4f4;
  &:checked::after {
    content: "";
    display: block;
    width: 4px;
    height: 8px;
    margin: 0 0 0 4px;
    border: solid #3c5a9c;
    border-width: 0 2px 2px 0;
    transform: rotate(38deg);
  }
  &:disabled {
    border-color: #b5b5b5;
  }
  &:disabled::after {
    border-color: #a0a0a0;
  }
`;

const EdgeCell = styled.td`
  border: dotted #707070;
  border-width: 0 1px 1px 0;
`;

const MoreButton = styled.button`
  display: block;
  width: 10px;
  height: 18px;
  border: 1px solid #666;
  border-radius: 2px;
  background: linear-gradient(90deg, #fff, #ccc);
`;

const ScrollBar = styled.div`
  display: flex;
  flex-direction: column;
  justify-content: space-between;
  width: 16px;
  padding: 7px 1px;
  margin-left: 1px;
  background: #ececec;
`;

const Thumb = styled.div`
  flex: 1;
  display: flex;
  flex-direction: column;
  align-items: center;
  justify-content: center;
  gap: 2px;
  align-self: stretch;
  margin: 8px 0 53px;
  border: 1px solid #959595;
  border-radius: 2px;
  background: linear-gradient(90deg, #f5f5f5, #d9d9d9 50%, #c2c2c6);
  i {
    width: 7px;
    height: 1px;
    background: #444;
  }
`;

const PaletteFooter = styled.div`
  display: flex;
  align-items: center;
  justify-content: space-between;
  height: 22px;
  padding: 0 3px 0 2px;
`;

const HelpLink = styled.a`
  color: #0b61c9;
`;

const ApplyButton = styled.button`
  width: 73px;
  height: 19px;
  line-height: 17px;
  color: #838383;
  border: 1px solid #adb2b5;
  border-radius: 2px;
`;

const WatermarkBox = styled.div`
  position: absolute;
  right: 7px;
  bottom: 2px;
  display: flex;
  align-items: center;
  gap: 4px;
  color: #9cc3d6;
  span {
    padding-top: 16px;
    font: bold 25px/28px "Liberation Sans", sans-serif;
  }
`;

export default App;
